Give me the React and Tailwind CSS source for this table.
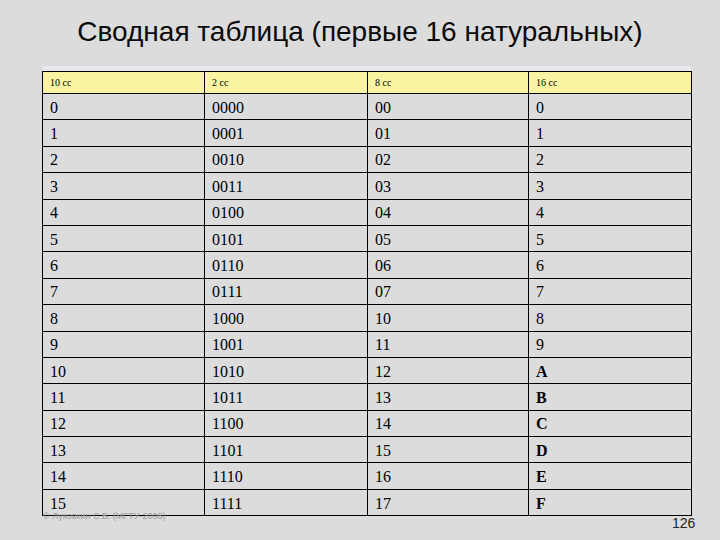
const rows = [
  ['0', '0000', '00', '0'],
  ['1', '0001', '01', '1'],
  ['2', '0010', '02', '2'],
  ['3', '0011', '03', '3'],
  ['4', '0100', '04', '4'],
  ['5', '0101', '05', '5'],
  ['6', '0110', '06', '6'],
  ['7', '0111', '07', '7'],
  ['8', '1000', '10', '8'],
  ['9', '1001', '11', '9'],
  ['10', '1010', '12', 'A'],
  ['11', '1011', '13', 'B'],
  ['12', '1100', '14', 'C'],
  ['13', '1101', '15', 'D'],
  ['14', '1110', '16', 'E'],
  ['15', '1111', '17', 'F'],
];

const heads = ['10 сс', '2 сс', '8 сс', '16 сс'];

export default function App() {
  return (
    <div className="w-[720px] h-[540px] bg-[#dcdcdc] overflow-hidden relative">
      <h1 className="pt-[17px] h-[66px] text-center text-[28px] leading-[30px] text-[#0a0a0a] font-['Liberation_Sans',Arial,sans-serif]">
        Сводная таблица (первые 16 натуральных)
      </h1>

      <div className="ml-[42px] w-[649px] border-t-[5px] border-[#e8e8ee]">
        <table className="w-full table-fixed border-collapse font-['Liberation_Serif','Times_New_Roman',serif] text-black">
          <colgroup>
            <col className="w-[162px]" />
            <col className="w-[163px]" />
            <col className="w-[161px]" />
            <col className="w-[163px]" />
          </colgroup>
          <thead>
            <tr className="h-[22px] bg-[#f8f4a2]">
              {heads.map((h) => (
                <th key={h} className="border border-black px-[7px] text-left font-normal text-[10px] leading-none">
                  {h}
                </th>
              ))}
            </tr>
          </thead>
          <tbody>
            {rows.map((r, i) => (
              <tr key={i} className="h-[26.4px]">
                {r.map((c, j) => (
                  <td
                    key={j}
                    className={`border border-black px-[7px] pt-[2px] text-[16px] leading-none ${j === 3 && /[A-F]/.test(c) ? 'font-bold' : ''}`}
                  >
                    {c}
                  </td>
                ))}
              </tr>
            ))}
          </tbody>
        </table>
      </div>

      {/* footer */}
      <div className="absolute left-[43px] top-[512px] text-[9px] leading-none text-[#9a9a9a] font-['Liberation_Sans',Arial,sans-serif]">
        © Луковкин С.Б. (МГТУ-2006)
      </div>
      <div className="absolute left-[672px] top-[516px] text-[14px] leading-none text-[#222] font-['Liberation_Sans',Arial,sans-serif]">
        126
      </div>
    </div>
  );
}
